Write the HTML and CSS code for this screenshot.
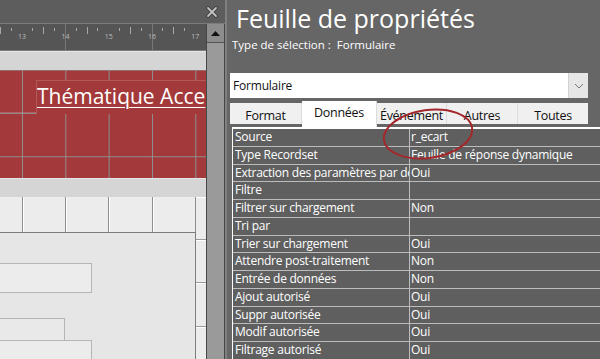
FILE: index.html
```html
<!DOCTYPE html>
<html lang="fr">
<head>
    <meta charset="UTF-8">
    <meta name="viewport" content="width=device-width, initial-scale=1.0">
    <title>Feuille de propriétés</title>
    <link rel="stylesheet" href="styles.css">
</head>
<body>
    <div class="app">
        <!-- Zone de conception du formulaire -->
        <div class="designer">
            <div class="designer-top">
                <svg class="close-ico" width="12" height="12" viewBox="0 0 12 12">
                    <path d="M2 2 L10 10 M10 2 L2 10" stroke="#3c3c3c" stroke-width="3.6" stroke-linecap="round"/>
                    <path d="M2 2 L10 10 M10 2 L2 10" stroke="#c4c4c4" stroke-width="1.8" stroke-linecap="round"/>
                </svg>
            </div>
            <div class="designer-body">
                <div class="canvas">
                    <div class="ruler">
                        <div class="ruler-track">
                            <div class="rseg"><span class="rnum"></span><span class="tick"></span><span class="tick long"></span><span class="tick"></span></div>
                            <div class="rseg"><span class="rnum">13</span><span class="tick"></span><span class="tick long"></span><span class="tick"></span></div>
                            <div class="rseg"><span class="rnum guide">14</span><span class="tick"></span><span class="tick long"></span><span class="tick"></span></div>
                            <div class="rseg"><span class="rnum">15</span><span class="tick"></span><span class="tick long"></span><span class="tick"></span></div>
                            <div class="rseg"><span class="rnum guide">16</span><span class="tick"></span><span class="tick long"></span><span class="tick"></span></div>
                            <div class="rseg"><span class="rnum">17</span><span class="tick"></span><span class="tick long"></span><span class="tick"></span></div>
                        </div>
                    </div>
                    <div class="band"></div>
                    <div class="header-section">
                        <div class="label-side"></div>
                        <div class="label-title">Thématique Acce</div>
                    </div>
                    <div class="band"></div>
                    <div class="detail">
                        <div class="detail-main">
                            <div class="cells">
                                <span class="cell first"></span><span class="cell"></span><span class="cell"></span><span class="cell"></span><span class="cell last"></span>
                            </div>
                            <div class="subform">
                                <div class="field wide f1"></div>
                                <div class="field narrow f2"></div>
                                <div class="field wide f3"></div>
                            </div>
                        </div>
                        <div class="detail-side">
                            <span class="scell top"></span>
                            <span class="scell"></span>
                            <span class="scell"></span>
                            <span class="scell"></span>
                        </div>
                    </div>
                </div>
                <div class="vscroll">
                    <div class="vscroll-up">
                        <svg width="9" height="5" viewBox="0 0 9 5"><path d="M0 5 L4.5 0 L9 5 Z" fill="#111"/></svg>
                    </div>
                    <div class="vscroll-track"></div>
                </div>
            </div>
        </div>
        <div class="divider"></div>

        <!-- Feuille de propriétés -->
        <div class="props">
            <h1 class="props-title">Feuille de propriétés</h1>
            <div class="sel-type">Type de sélection :&nbsp; Formulaire</div>
            <div class="combo">
                <span class="combo-text">Formulaire</span>
                <span class="combo-btn">
                    <svg width="10" height="6" viewBox="0 0 10 6"><path d="M1 1 L5 5 L9 1" fill="none" stroke="#7a7a7a" stroke-width="1"/></svg>
                </span>
            </div>
            <div class="tabs">
                <div class="tab t-format">Format</div>
                <div class="tab active t-donnees">Données</div>
                <div class="tab t-event">Événement</div>
                <div class="tab t-autres">Autres</div>
                <div class="tab t-toutes">Toutes</div>
            </div>
            <div class="prop-grid">
                <div class="prow"><span class="pname">Source</span><span class="pval">r_ecart</span></div>
                <div class="prow"><span class="pname">Type Recordset</span><span class="pval">Feuille de réponse dynamique</span></div>
                <div class="prow"><span class="pname">Extraction des paramètres par défaut</span><span class="pval">Oui</span></div>
                <div class="prow"><span class="pname">Filtre</span><span class="pval"></span></div>
                <div class="prow"><span class="pname">Filtrer sur chargement</span><span class="pval">Non</span></div>
                <div class="prow"><span class="pname">Tri par</span><span class="pval"></span></div>
                <div class="prow"><span class="pname">Trier sur chargement</span><span class="pval">Oui</span></div>
                <div class="prow"><span class="pname">Attendre post-traitement</span><span class="pval">Non</span></div>
                <div class="prow"><span class="pname">Entrée de données</span><span class="pval">Non</span></div>
                <div class="prow"><span class="pname">Ajout autorisé</span><span class="pval">Oui</span></div>
                <div class="prow"><span class="pname">Suppr autorisée</span><span class="pval">Oui</span></div>
                <div class="prow"><span class="pname">Modif autorisée</span><span class="pval">Oui</span></div>
                <div class="prow"><span class="pname">Filtrage autorisé</span><span class="pval">Oui</span></div>
            </div>
            <!-- Annotation : cercle rouge autour de la source -->
            <svg class="annot" width="373" height="359" viewBox="0 0 373 359">
                <ellipse cx="201" cy="134" rx="44.5" ry="24" transform="rotate(-8 201 134)" fill="none" stroke="#a3272b" stroke-width="2"/>
            </svg>
        </div>
    </div>
</body>
</html>
```

FILE: styles.css
```css
* {
    box-sizing: border-box;
}
body {
    margin: 0;
    background: #5c5c5c;
    font-family: "Open Sans", "Noto Sans", sans-serif;
}
.app {
    display: flex;
    width: 600px;
    height: 359px;
    overflow: hidden;
}

/* Zone de conception */
.designer {
    width: 225px;
    flex: none;
    display: flex;
    flex-direction: column;
    background: #5d5d5d;
}
.designer-top {
    height: 24px;
    flex: none;
    display: flex;
    justify-content: flex-end;
    align-items: center;
    padding-right: 7px;
    border-bottom: 1px solid #7c7c7c;
}
.designer-body {
    flex: 1;
    display: flex;
    min-height: 0;
}
.canvas {
    width: 206px;
    flex: none;
    overflow: hidden;
    display: flex;
    flex-direction: column;
}
.ruler {
    height: 27px;
    flex: none;
    background: #555;
    border-bottom: 1px solid #7a7a7a;
    overflow: hidden;
}
.ruler-track {
    display: flex;
    margin-left: -26.7px;
}
.rseg {
    width: 43.33px;
    flex: none;
    display: flex;
}
.rseg span {
    width: 10.83px;
    flex: none;
    position: relative;
    height: 26px;
}
.rnum {
    font-size: 7px;
    color: #bdbdbd;
    text-align: center;
    padding-top: 9px;
    line-height: 8px;
}
.rnum.guide {
    background: linear-gradient(#777, #777) no-repeat center / 1px 100%;
}
.tick {
    background: linear-gradient(#a8a8a8, #a8a8a8) no-repeat center 4px / 1px 3px;
}
.tick.long {
    background: linear-gradient(#a8a8a8, #a8a8a8) no-repeat center 3px / 1px 7px;
}
.band {
    height: 19px;
    flex: none;
    background: #d5d5d5;
    border-top: 1px solid #e6e6e6;
}
.header-section {
    height: 108px;
    flex: none;
    display: flex;
    padding-top: 10px;
    background-color: #a3393a;
    background-image:
        linear-gradient(to right, #8f8f8f 1px, transparent 1px),
        linear-gradient(#8f8f8f 1px, transparent 1px);
    background-size: 43.33px 100%, 100% 43.33px;
    background-position: 22px 0, 0 -0.4px;
}
.label-side {
    width: 36px;
    height: 33px;
    flex: none;
    border-bottom: 1px solid rgba(255, 255, 255, 0.18);
}
.label-title {
    flex: 1;
    height: 34px;
    background: #a3393a;
    border-top: 1px solid rgba(255, 255, 255, 0.16);
    border-left: 1px solid rgba(255, 255, 255, 0.16);
    color: #fff;
    font-size: 21px;
    line-height: 26px;
    padding-top: 2px;
    text-decoration: underline;
    text-decoration-thickness: 1px;
    text-underline-offset: 3px;
    white-space: nowrap;
    overflow: hidden;
}
.detail {
    flex: 1;
    display: flex;
}
.detail-main {
    width: 196px;
    flex: none;
    display: flex;
    flex-direction: column;
}
.cells {
    height: 35px;
    flex: none;
    display: flex;
    margin-left: -20.6px;
    background: #ececec;
}
.cell {
    width: 43.33px;
    flex: none;
    border-right: 1px solid #8e8e8e;
    box-shadow: inset 1px 0 0 #fff;
}
.subform {
    flex: 1;
    background: #e6e6e6;
    border-top: 1px solid #7d7d7d;
    border-right: 1px solid #7d7d7d;
    padding-top: 30px;
}
.field {
    background: #ececec;
    border: 1px solid #b5b5b5;
    border-left: none;
}
.field.wide {
    width: 92px;
}
.field.narrow {
    width: 65px;
    background: #e9e9e9;
}
.f1 {
    height: 30px;
}
.f2 {
    height: 22px;
    margin-top: 25px;
    border-bottom: none;
}
.f3 {
    height: 30px;
}
.detail-side {
    flex: 1;
    display: flex;
    flex-direction: column;
    background: #ececec;
}
.scell {
    height: 43.33px;
    flex: none;
    border-bottom: 1px solid #9a9a9a;
    box-shadow: inset 0 1px 0 #fff;
}
.scell.top {
    height: 43px;
}
.vscroll {
    width: 19px;
    flex: none;
    display: flex;
    flex-direction: column;
    border-left: 1px solid #474747;
    border-right: 1px solid #474747;
}
.vscroll-up {
    height: 19px;
    flex: none;
    display: flex;
    align-items: center;
    justify-content: center;
    background: #8d8d8d;
    border-bottom: 1px solid #555;
}
.vscroll-track {
    flex: 1;
    background: #9a9a9a;
}
.divider {
    width: 2px;
    flex: none;
    background: #808080;
}

/* Feuille de propriétés */
.props {
    flex: 1;
    position: relative;
    background: #666;
    padding-left: 3px;
    overflow: hidden;
    color: #fff;
}
.props-title {
    margin: 0 0 0 6px;
    padding-top: 3px;
    font-size: 25px;
    line-height: 30px;
    font-weight: normal;
    white-space: nowrap;
}
.sel-type {
    margin: 4px 0 0 2px;
    font-size: 11.5px;
    line-height: 16px;
    white-space: nowrap;
}
.combo {
    margin-top: 20px;
    width: 358px;
    height: 25px;
    display: flex;
    background: #fff;
    color: #111;
}
.combo-text {
    flex: 1;
    font-size: 12px;
    letter-spacing: -0.2px;
    line-height: 25px;
    padding-left: 3px;
}
.combo-btn {
    width: 20px;
    display: flex;
    align-items: center;
    justify-content: center;
    background: #e6e6e6;
    border-left: 1px solid #d2d2d2;
}
.tabs {
    margin-top: 3px;
    height: 26px;
    width: 358px;
    display: flex;
    align-items: flex-start;
}
.tab {
    height: 21px;
    margin-top: 2px;
    background: #f0f0f0;
    color: #111;
    font-size: 12.5px;
    letter-spacing: -0.3px;
    line-height: 21px;
    padding-top: 2px;
    text-align: center;
    border-right: 1px solid #dcdcdc;
}
.tab.active {
    height: 26px;
    margin-top: 0;
    background: #fff;
    padding-top: 1px;
}
.t-format { width: 72px; }
.t-donnees { width: 75px; }
.t-event { width: 70px; }
.t-autres { width: 71px; }
.t-toutes { width: 70px; border-right: none; }
.prop-grid {
    margin-left: 2px;
    width: 400px;
    border-top: 2px solid #fff;
    border-left: 1px solid #fff;
    background: #fff;
}
.prow {
    display: flex;
    height: 17.76px;
    border-bottom: 1px solid #bcbcbc;
    background: #5f5f5f;
    font-size: 12px;
    letter-spacing: -0.25px;
    line-height: 16.76px;
}
.pname {
    width: 177px;
    flex: none;
    padding-left: 2px;
    border-right: 1px solid #bcbcbc;
    white-space: nowrap;
    overflow: hidden;
}
.pval {
    flex: 1;
    padding-left: 1px;
    white-space: nowrap;
}
.annot {
    position: absolute;
    left: 0;
    top: 0;
    pointer-events: none;
}
```
